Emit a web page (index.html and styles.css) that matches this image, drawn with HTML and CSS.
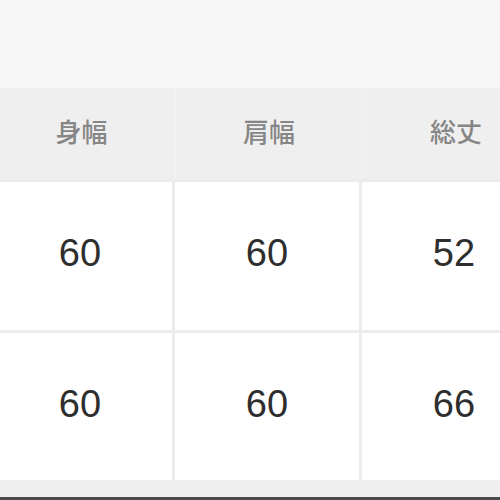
FILE: index.html
```html
<!DOCTYPE html>
<html lang="ja">
<head>
<meta charset="utf-8">
<link rel="stylesheet" href="styles.css">
</head>
<body>
<div class="page">
  <div class="top"></div>
  <div class="table">
    <div class="cell head">身幅</div>
    <div class="cell head">肩幅</div>
    <div class="cell head">総丈</div>
    <div class="cell val">60</div>
    <div class="cell val">60</div>
    <div class="cell val">52</div>
    <div class="cell val">60</div>
    <div class="cell val">60</div>
    <div class="cell val">66</div>
  </div>
  <div class="bottom"></div>
  <div class="edge"></div>
</div>
</body>
</html>
```
FILE: styles.css
```css
html, body {
  margin: 0;
  padding: 0;
  width: 500px;
  height: 500px;
  overflow: hidden;
  background: #f7f7f7;
}
.page {
  width: 500px;
  height: 500px;
  display: flex;
  flex-direction: column;
  overflow: hidden;
}
.top {
  height: 88px;
  background: #f7f7f7;
  flex: none;
}
.table {
  flex: none;
  display: grid;
  grid-template-columns: 184px 184px 184px;
  grid-template-rows: 91px 148px 147px;
  column-gap: 3px;
  row-gap: 3px;
  margin-left: -12px;
  width: 558px;
  background: #ececec;
}
.cell {
  display: flex;
  align-items: center;
  justify-content: center;
  box-sizing: border-box;
}
.head {
  background: #efefef;
  color: #868686;
  font-family: "Noto Sans CJK JP", "Noto Sans", sans-serif;
  font-size: 26px;
  font-weight: 500;
  padding-bottom: 6px;
  margin-right: -3px;
  padding-right: 0;
  border-left: 1px solid #f3f3f3;
}
.head:first-child {
  border-left: none;
}
.val {
  background: #ffffff;
  color: #2e2e2e;
  font-family: "Liberation Sans", Arial, sans-serif;
  font-size: 38px;
  padding-bottom: 5px;
}
.bottom {
  height: 17px;
  background: #efefef;
  flex: none;
}
.edge {
  height: 3px;
  background: #4a4a4a;
  flex: none;
}
```
